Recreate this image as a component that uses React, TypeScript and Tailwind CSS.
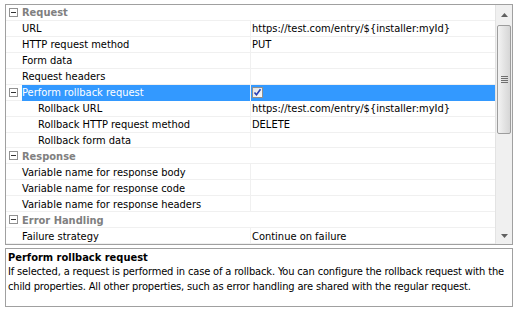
import { ReactNode } from 'react';

type Row =
  | { kind: 'group'; label: string }
  | { kind: 'prop'; label: string; value?: ReactNode; indent?: boolean; toggle?: boolean; selected?: boolean };

const rows: Row[] = [
  { kind: 'group', label: 'Request' },
  { kind: 'prop', label: 'URL', value: 'https://test.com/entry/${installer:myId}' },
  { kind: 'prop', label: 'HTTP request method', value: 'PUT' },
  { kind: 'prop', label: 'Form data' },
  { kind: 'prop', label: 'Request headers' },
  { kind: 'prop', label: 'Perform rollback request', toggle: true, selected: true, value: 'check' },
  { kind: 'prop', label: 'Rollback URL', indent: true, value: 'https://test.com/entry/${installer:myId}' },
  { kind: 'prop', label: 'Rollback HTTP request method', indent: true, value: 'DELETE' },
  { kind: 'prop', label: 'Rollback form data', indent: true },
  { kind: 'group', label: 'Response' },
  { kind: 'prop', label: 'Variable name for response body' },
  { kind: 'prop', label: 'Variable name for response code' },
  { kind: 'prop', label: 'Variable name for response headers' },
  { kind: 'group', label: 'Error Handling' },
  { kind: 'prop', label: 'Failure strategy', value: 'Continue on failure' },
];

function MinusBox() {
  return (
    <div className="w-[9px] h-[9px] border border-[#919191] bg-white flex items-center justify-center">
      <div className="w-[5px] h-px bg-[#333]" />
    </div>
  );
}

function CheckBox() {
  return (
    <div className="w-[11px] h-[11px] border border-[#8f8f8f] bg-gradient-to-br from-[#e4e4e4] to-[#fafafa] flex items-center justify-center">
      <svg width="9" height="9" viewBox="0 0 9 9">
        <path d="M1.5 4.5 L3.5 6.8 L7.5 1.2" stroke="#2a3fb5" strokeWidth="1.6" fill="none" />
      </svg>
    </div>
  );
}

function GridRow({ row }: { row: Row }) {
  if (row.kind === 'group') {
    return (
      <div className="h-4 flex items-center border-b border-[#f0f0f0]">
        <div className="w-[16px] pl-[3px] flex items-center">
          <MinusBox />
        </div>
        <span className="font-bold text-[#808080] pt-px">{row.label}</span>
      </div>
    );
  }
  const sel = row.selected;
  return (
    <div className="h-4 flex">
      <div className="w-[16px] flex items-center pl-[3px] border-b border-[#f0f0f0]">
        {row.toggle && <MinusBox />}
      </div>
      <div
        className={`w-[228px] flex items-center border-b ${sel ? 'bg-[#3399ff] text-white border-[#3399ff]' : 'border-[#f0f0f0]'} ${row.indent ? 'pl-[16px]' : ''}`}
      >
        <span className="whitespace-nowrap pt-px">{row.label}</span>
      </div>
      <div className="w-px bg-[#f0f0f0]" />
      <div
        className={`flex-1 flex items-center pl-px border-b ${sel ? 'bg-[#3399ff] border-[#3399ff]' : 'border-[#f0f0f0]'}`}
      >
        {row.value === 'check' ? <CheckBox /> : <span className="whitespace-nowrap pt-px">{row.value}</span>}
      </div>
    </div>
  );
}

function ScrollBar() {
  return (
    <div className="w-[17px] flex flex-col bg-[#f0f0f0] border-l border-[#e3e3e3]">
      <div className="h-[20px] flex items-center justify-center">
        <svg width="7" height="4" viewBox="0 0 7 4">
          <path d="M0 4 L3.5 0 L7 4 Z" fill="#606060" />
        </svg>
      </div>
      <div className="mx-px h-[109px] rounded-[2px] border border-[#9d9d9d] bg-gradient-to-r from-[#f3f3f3] via-[#e4e4e4] to-[#d6d6d6] flex items-center justify-center">
        <div className="flex flex-col gap-px">
          <div className="w-[7px] h-px bg-[#6f6f6f]" />
          <div className="w-[7px] h-px bg-[#6f6f6f]" />
          <div className="w-[7px] h-px bg-[#6f6f6f]" />
          <div className="w-[7px] h-px bg-[#6f6f6f]" />
        </div>
      </div>
      <div className="flex-1" />
      <div className="h-[17px] flex items-center justify-center">
        <svg width="7" height="4" viewBox="0 0 7 4">
          <path d="M0 0 L7 0 L3.5 4 Z" fill="#606060" />
        </svg>
      </div>
    </div>
  );
}

export default function App() {
  return (
    <div
      className="w-[518px] h-[311px] bg-white flex flex-col gap-[3px] px-[5px] pt-[4px] text-[11px] leading-none text-black"
      style={{ fontFamily: 'Tahoma, "DejaVu Sans Condensed", "Liberation Sans", sans-serif' }}
    >
      <div className="h-[241px] border border-[#a0a0a0] flex overflow-hidden">
        <div className="flex-1 flex flex-col overflow-hidden">
          {rows.map((r, i) => (
            <GridRow key={i} row={r} />
          ))}
        </div>
        <ScrollBar />
      </div>
      <div className="h-[59px] border border-[#a0a0a0] px-[2px] pt-[3px]">
        <div className="font-bold leading-[12px]">Perform rollback request</div>
        <p className="leading-[15px] tracking-[-0.15px]">
          If selected, a request is performed in case of a rollback. You can configure the rollback request with the
          child properties. All other properties, such as error handling are shared with the regular request.
        </p>
      </div>
    </div>
  );
}
